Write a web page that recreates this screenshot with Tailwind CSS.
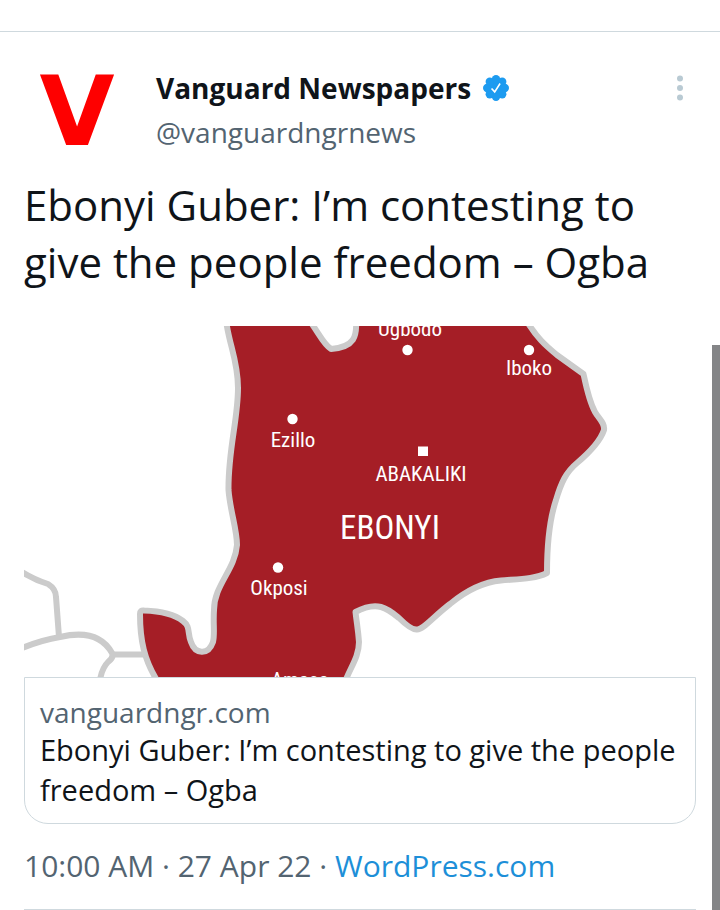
<!DOCTYPE html>
<html lang="en">
<head>
<meta charset="utf-8">
<meta name="viewport" content="width=device-width, initial-scale=1">
<title>Vanguard Newspapers</title>
<script src="https://cdn.jsdelivr.net/npm/@tailwindcss/browser@4"></script>
</head>
<body class="bg-white text-[#0f1419] font-['Open_Sans',sans-serif] overflow-x-hidden">
<div class="h-8 border-b border-[#cfd9de]"></div>
<div class="flex min-h-[878px]">
  <main class="min-w-0 flex-1 pl-6 pr-4">
    <article>
      <header class="flex pt-6">
        <a href="#" aria-label="Vanguard Newspapers profile" class="mt-2 block size-26 shrink-0">
          <svg viewBox="0 0 104 104" class="size-full"><text x="53" y="81" text-anchor="middle" font-family="'DejaVu Sans', sans-serif" font-weight="700" font-size="97" fill="#fe0000">V</text></svg>
        </a>
        <div class="ml-7 min-w-0 flex-1 pt-2">
          <div class="flex h-12 items-center gap-3">
            <a href="#" class="text-[28px] font-bold leading-[48px]">Vanguard Newspapers</a>
            <svg viewBox="0 0 28 28" class="size-[26px] shrink-0" role="img" aria-label="Verified account">
              <g fill="#1d9bf0"><circle cx="14" cy="14" r="10.5"/><circle cx="14" cy="4.500" r="4.500"/><circle cx="20.7" cy="7.3" r="4.500"/><circle cx="23.500" cy="14" r="4.500"/><circle cx="20.7" cy="20.7" r="4.500"/><circle cx="14" cy="23.500" r="4.500"/><circle cx="7.3" cy="20.7" r="4.500"/><circle cx="4.500" cy="14" r="4.500"/><circle cx="7.3" cy="7.3" r="4.500"/></g>
              <path d="M9.2 14.600l3.400 3.600 5.800-9" fill="none" stroke="#fff" stroke-width="1.700"/>
            </svg>
          </div>
          <a href="#" class="block text-[28px] leading-[40px] text-[#536471]">@vanguardngrnews</a>
        </div>
        <button type="button" aria-label="More" class="mt-4 mr-2 h-8 w-4 shrink-0">
          <svg viewBox="0 0 16 32" class="size-full" fill="#b9cad3"><circle cx="8" cy="6.500" r="3"/><circle cx="8" cy="16" r="3"/><circle cx="8" cy="25.500" r="3"/></svg>
        </button>
      </header>
      <p class="mt-2 text-[42px] leading-[57px]">Ebonyi Guber: I’m contesting to give the people freedom – Ogba</p>
      <a href="#" class="mt-9 block">
        <div class="overflow-hidden rounded-t-3xl">
          <svg viewBox="24 326 672 351" class="block w-full" role="img" aria-label="Map of Ebonyi">
            <g fill="none" stroke="#cbcbcb" stroke-width="6" stroke-linejoin="round">
              <path d="M22 572Q35 580 48 584Q56 589 56 597L59 637"/>
              <path d="M22 648Q42 640 60 637Q98 628 112 653Q114 658 108 662Q102 668 100 680"/>
              <path d="M112 654.500H144"/>
              <path fill="#a51e26" d="M226 320C229 345 238 360 238 388C238 420 228 450 228.500 490C230 510 237 530 237 545C235 570 214 585 214 610C213 624 215 634 213 642C208 656 195 654 191 642C187 633 191 627 183 621C174 614 158 611 144 610.500Q140 610 140 614C140 640 144 660 158 682H345C350 668 359 657 359 642C358 629 357 625 355.500 612C378 600 388 609 399 618C408 627 413 630 417 629.500C423 630 433 617 450 604C467 590 483 582 501 580.500C519 579 535 579 547 573C547 552 549 521 556 500C561 483 566 472 577 463C590 452 600 442 604 430C605 423 599 419 595 412C589 401 586 386 583.500 374L557 355C545 345 537 338 526 320H356C357 336 355 347 331 349C323 344 319 333 309 320Z"/>
            </g>
            <g fill="#fff">
              <circle cx="407.500" cy="350" r="5.200"/><circle cx="529" cy="350" r="5.200"/><circle cx="292.500" cy="419" r="5.200"/><circle cx="278" cy="567.500" r="5.200"/>
              <rect x="418" y="446.500" width="10" height="9.500"/>
            </g>
            <g fill="#fff" font-family="'Noto Sans Condensed','Roboto Condensed','Open Sans Condensed',sans-serif" font-size="21" font-weight="400" text-anchor="middle">
              <text x="410" y="336">Ugbodo</text>
              <text x="529" y="375">Iboko</text>
              <text x="293" y="447">Ezillo</text>
              <text x="421" y="481">ABAKALIKI</text>
              <text x="390" y="539" font-size="33">EBONYI</text>
              <text x="279" y="595">Okposi</text>
              <text x="300" y="687">Amaso</text>
            </g>
          </svg>
        </div>
        <div class="rounded-b-3xl border border-[#cfd9de] px-[15px] pt-4 pb-[13px]">
          <div class="text-[28px] leading-[36px] text-[#536471]">vanguardngr.com</div>
          <div class="text-[29px] leading-[40px]">Ebonyi Guber: I’m contesting to give the people freedom – Ogba</div>
        </div>
      </a>
      <footer class="mt-[22px] border-b border-[#cfd9de] pb-[23px] text-[30px] leading-[40px] text-[#536471]"><time>10:00 AM · 27 Apr 22</time> · <a href="#" class="text-[#1d8fd8]">WordPress.com</a></footer>
    </article>
  </main>
  <div class="mt-[313px] w-2 shrink-0 bg-[#848587]"></div>
</div>
</body>
</html>
